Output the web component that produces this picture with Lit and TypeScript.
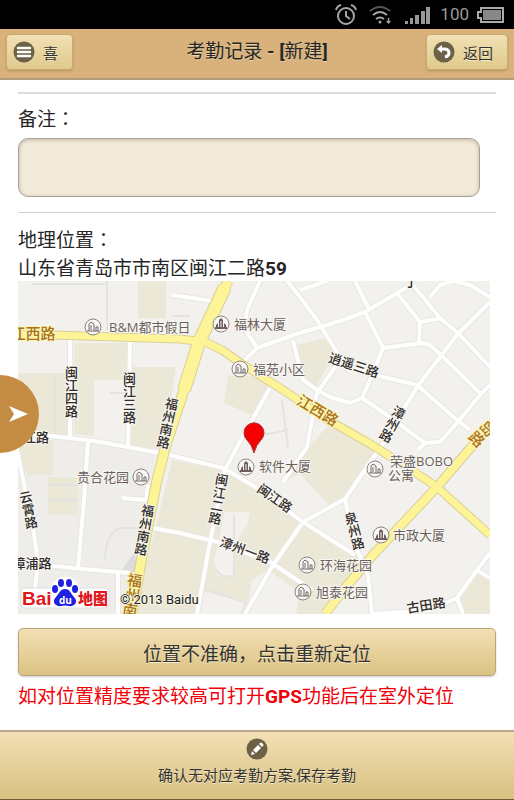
import { LitElement, html, css, svg } from "lit";
import { customElement, property, state } from "lit/decorators.js";

type Point = [number, number];
type Label = { text: string; at: Point; angle?: number; vertical?: boolean; main?: boolean };
type Poi = { text: string; icon: Point; at: Point; tower?: boolean; second?: string };

/* Blocks of built-up land */
const BLOCKS = [
  "M74 343H127V380H94V436L74 434Z",
  "M134 367H176L163 450L131 445V367Z",
  "M138 281H166V318H138Z",
  "M18 373H68V434H42L18 430Z",
  "M18 441L53 440V475H28L18 460Z",
  "M48 477H79L78 515H48Z",
  "M172 460L222 470L257 490L303 522L345 552L365 557L325 614H132L155 530Z",
  "M330 424L378 449L345 498L330 506L300 474L284 482L308 447Z",
  "M228 376L262 376L270 388L252 415L224 403Z",
  "M297 345L330 337L336 353L315 388L303 378Z",
  "M463 614L458 598L478 572L490 580V614Z",
];
/* Paler courtyards inside the blocks */
const YARDS = [
  "M225 512H250L247 525L234 545L234 575L218 576L214 560Z",
  "M252 580L268 570L300 592L296 614H246Z",
  "M204 591L245 600L240 614H199Z",
];
const LANES = [
  "M107 281V330", "M32 284H106", "M55 373V434", "M110 393H126", "M172 316L190 316",
  "M105 560Q106 530 122 528L152 528", "M48 485H78M48 500H78", "M234 515L234 575Q222 580 217 570",
  "M203 589L248 603", "M282 400L288 448", "M245 430L268 434L288 430",
];
const STREETS = [
  "M70 339V437", "M130 342L128 448", "M18 433L60 437L95 441L165 454L223 468L257 488L303 522L355 555",
  "M88 441L84 500L78 568", "M16 445L33 528L38 562L35 590", "M18 562L83 569L130 573",
  "M118 574V614", "M122 498L146 500L148 485", "M153 528L180 533L217 542L270 562L312 590",
  "M270 388L237 447L225 470L210 542L197 614", "M490 302L457 335L417 387L380 448L345 499L303 522L273 565L245 614",
  "M345 499L355 545L368 575L372 614", "M340 360L317 393L307 447L283 482",
  "M383 348L373 373L362 398L350 403L330 397L317 390L303 380L293 341",
  "M362 398L387 415L425 443L440 442L457 423L480 395L490 385", "M425 443L418 450",
  "M355 368L383 377L417 385L457 420L470 430", "M243 362L257 348L293 335L340 321L365 312L397 293L413 284",
  "M260 281L247 310L244 328L257 348", "M287 281L300 297L317 320L337 352L350 372", "M300 290L327 281",
  "M172 295L212 301", "M355 281L370 311", "M365 312L383 348L423 343L430 345L443 357L480 393",
  "M397 293L420 322L442 318M420 322L419 343", "M413 285L440 318L458 333L490 367",
  "M430 297L440 285L453 281L470 285L490 297", "M373 614L430 610L457 598L477 570L490 553M477 570L490 578M457 598L463 614",
];
const AVENUES = [
  { d: "M18 334L180 339L205 342L222 350L245 366L280 388L330 421L372 445L413 471L437 487L490 535", w: 7 },
  { d: "M490 425L473 445L437 487L373 555L345 588L325 614", w: 8 },
  { d: "M228 281L199 342L184 390L166 445L157 480L141 562L132 614", w: 9 },
  { d: "M225 287L199 342L184 390", w: 12 },
];
const LABELS: Label[] = [
  { text: "闽江四路", at: [71, 392], vertical: true },
  { text: "闽江三路", at: [129, 398], vertical: true },
  { text: "福州南路", at: [167, 423], vertical: true, angle: 12 },
  { text: "福州南路", at: [144, 530], vertical: true, angle: 10 },
  { text: "闽江二路", at: [218, 499], vertical: true, angle: 10 },
  { text: "漳州路", at: [392, 424], vertical: true, angle: 28 },
  { text: "泉州路", at: [354, 531], vertical: true, angle: -15 },
  { text: "云霄路", at: [28, 510], vertical: true, angle: -12 },
  { text: "闽江路", at: [275, 498], angle: 35 },
  { text: "漳州一路", at: [245, 550], angle: 20 },
  { text: "逍遥三路", at: [354, 365], angle: 18 },
  { text: "古田路", at: [426, 605], angle: -9 },
  { text: "漳浦路", at: [32, 563] },
  { text: "江路", at: [36, 437] },
  { text: "丁", at: [411, 281] },
  { text: "江西路", at: [33, 333], main: true },
  { text: "江西路", at: [318, 410], main: true, angle: 31 },
  { text: "福州南", at: [132, 595], main: true, vertical: true, angle: 9 },
  { text: "青岛路", at: [487, 428], main: true, vertical: true, angle: 45 },
];
const POIS: Poi[] = [
  { text: "B&M都市假日", icon: [93, 327], at: [109, 327] },
  { text: "福林大厦", icon: [221, 324], at: [234, 324], tower: true },
  { text: "福苑小区", icon: [240, 369], at: [253, 369] },
  { text: "软件大厦", icon: [246, 467], at: [259, 466], tower: true },
  { text: "贵合花园", icon: [141, 477], at: [77, 477] },
  { text: "荣盛BOBO", icon: [375, 469], at: [390, 461], second: "公寓" },
  { text: "市政大厦", icon: [381, 535], at: [393, 535], tower: true },
  { text: "环海花园", icon: [307, 565], at: [320, 565] },
  { text: "旭泰花园", icon: [303, 592], at: [316, 592] },
];

@customElement("status-bar")
export class StatusBar extends LitElement {
  @property({ type: Number }) charge = 100;
  static styles = css`
    :host { display: flex; align-items: center; justify-content: flex-end; height: 29px; padding-right: 10px; background: #000; color: #999; }
    svg { display: block; }
    .alarm { margin-right: 12px; }
    .wifi { margin-right: 12px; }
    .signal { margin-right: 10px; }
    .charge { font: 17px/29px Roboto, sans-serif; margin-right: 8px; }
  `;
  render() {
    return html`
      <svg class="alarm" width="22" height="22" viewBox="0 0 22 22" fill="none" stroke="#a5a5a5" stroke-width="2">
        <circle cx="11" cy="12" r="8" /><path d="M11 7v5l4 3M1 6q1-4 5-5M21 6q-1-4-5-5" />
      </svg>
      <svg class="wifi" width="24" height="20" viewBox="0 0 24 20" fill="none" stroke="#a5a5a5" stroke-width="2">
        <path d="M1 6q10-8 20 0" stroke="#555" /><path d="M4 10q7-6 14 0M7 14q4-3 8 0" />
        <circle cx="11" cy="17" r="1.5" fill="#a5a5a5" stroke="none" /><path d="M19.500 13v5" stroke-width="1.500" /><path d="M17 16h5l-2.500 3z" fill="#a5a5a5" stroke="none" />
      </svg>
      <svg class="signal" width="25" height="18" viewBox="0 0 25 18" fill="#999">
        <path d="M0 15h3v3H0zM5 12h3v6H5zM10 9h4v9h-4zM16 5h4v13h-4zM21 1h4v17h-4z" />
      </svg>
      <span class="charge">${this.charge}</span>
      <svg width="27" height="16" viewBox="0 0 27 16">
        <path d="M4 1h22v14H4v-4H1V5h3z" fill="none" stroke="#aaa" stroke-width="2" /><path d="M6 3h18v10H6z" fill="#888" />
      </svg>
    `;
  }
}

@customElement("street-map")
export class StreetMap extends LitElement {
  static styles = css`
    :host { display: block; }
    svg { display: block; width: 100%; height: auto; }
    text { font: 13px "Open Sans", "Noto Sans CJK SC", sans-serif; fill: #6a615c; }
    .street, .avenue, .lane { fill: none; stroke-linejoin: round; }
    .street { stroke: #fefefe; stroke-width: 4px; }
    .street.casing { stroke: #e9e6e1; stroke-width: 6px; }
    .lane { stroke: #e4e3e1; stroke-width: 2px; }
    .block { fill: #ebe8d8; }
    .yard { fill: #f3f1ee; }
    .avenue { stroke: #fdf498; }
    .avenue.edge { stroke: #d9cf95; }
    .halo { paint-order: stroke; stroke: #f8f6f2; stroke-width: 2px; }
    .road { font-weight: 500; fill: #302d2a; text-anchor: middle; dominant-baseline: central; }
    .main { font-size: 15px; fill: #a9731b; stroke: #fcf5b8; }
    .down { writing-mode: vertical-rl; }
    .credit { font: 13px Roboto, sans-serif; fill: #222; stroke: #f5f2e4; }
    .brand { font: 700 19px "Liberation Sans", sans-serif; fill: #e1171c; }
    .brand.cjk { font: 900 15px "Noto Sans CJK SC", sans-serif; }
    .brand.du { font: 700 10px "Open Sans", sans-serif; fill: #fff; }
  `;
  private label(l: Label) {
    return svg`<text class="halo road ${l.main ? "main" : ""} ${l.vertical ? "down" : ""}"
      transform="translate(${l.at[0]} ${l.at[1]}) rotate(${l.angle ?? 0})">${l.text}</text>`;
  }
  private poi(p: Poi) {
    return svg`
      <g transform="translate(${p.icon[0]} ${p.icon[1]})">
        <circle r="8" fill="#f8f6f4" stroke="#8d8580" />
        ${p.tower
          ? svg`<path d="M0-6L2-4V3H3V-1L5 1V3H6V5H-6V3H-5V1L-3-1V3H-2V-4Z" fill="#6f5f5c" /><path d="M0-3V3" stroke="#f8f6f4" />`
          : svg`<path d="M-4 4V-3L-2-5L1-3V4M-6 4H6M3 4V0H5V4M-2-2V3" fill="none" stroke="#756b68" />`}
      </g>
      <text class="halo" x=${p.at[0]} y=${p.at[1] + 5}>${p.text}</text>
      ${p.second ? svg`<text class="halo" x=${p.at[0] - 2} y=${p.at[1] + 19}>${p.second}</text>` : ""}`;
  }
  render() {
    return html`
      <svg viewBox="18 281 472 333" role="img" aria-label="地图">
        <rect x="18" y="281" width="472" height="333" fill="#f3f1ee" />
        <path d="M18 441L88 441L155 454L130 614H18Z" fill="#efedea" />
        ${BLOCKS.map((d) => svg`<path class="block" d=${d} />`)}
        ${YARDS.map((d) => svg`<path class="yard" d=${d} />`)}
        <path d="M120 572L135 552L137 572Z" fill="#dcdcdc" />
        ${LANES.map((d) => svg`<path class="lane" d=${d} />`)}
        ${STREETS.map((d) => svg`<path class="street casing" d=${d} />`)}
        ${STREETS.map((d) => svg`<path class="street" d=${d} />`)}
        ${AVENUES.map((a) => svg`<path class="avenue edge" d=${a.d} stroke-width=${a.w + 2} />`)}
        ${AVENUES.map((a) => svg`<path class="avenue" d=${a.d} stroke-width=${a.w} />`)}
        ${LABELS.map((l) => this.label(l))}
        ${POIS.map((p) => this.poi(p))}
        <path d="M254 453Q252 445 247 440A10 10 0 1 1 261 440Q256 445 254 453Z" fill="#f40000" stroke="#a33" />
        <g>
          <rect x="21" y="588" width="88" height="20" rx="4" fill="#fff" stroke="#ddd" />
          <circle cx="65" cy="592" r="15" fill="#fff" />
          <text class="brand" x="22" y="605">Bai</text>
          <g fill="#2020e0">
            <ellipse cx="55" cy="589" rx="3" ry="4" /><ellipse cx="61" cy="583" rx="3" ry="4" />
            <ellipse cx="69" cy="583" rx="3" ry="4" /><ellipse cx="75" cy="589" rx="3" ry="4" />
            <path d="M65 589C70 589 71 594 74 597C79 602 74 607 69 606Q65 605 61 606C56 607 51 602 56 597C59 594 60 589 65 589Z" />
          </g>
          <text class="brand du" x="59" y="604">du</text>
          <text class="brand cjk" x="78" y="604">地图</text>
        </g>
        <text class="halo credit" x="120" y="604">© 2013 Baidu</text>
      </svg>
    `;
  }
}

@customElement("app-root")
export class AppRoot extends LitElement {
  @state() private remark = "";
  static styles = css`
    :host {
      display: flex; flex-direction: column; position: relative; min-height: 100vh; background: #fff; color: #262626;
      font: 19px/30px Roboto, "Noto Sans CJK SC", sans-serif;
    }
    * { box-sizing: border-box; }
    button { font-family: inherit; color: #333; cursor: pointer; text-shadow: 0 1px 0 #f6e9c4; }
    b { font-weight: 700; }
    .punct { font-family: "Noto Sans CJK TC", sans-serif; }
    .bar {
      display: grid; grid-template-columns: 1fr auto 1fr; align-items: center; height: 51px; padding: 0 6px 3px;
      background: #d8b27a; border-bottom: 2px solid #b39b7f;
    }
    .bar h1 { margin: 0; font-size: 19px; font-weight: 400; line-height: 30px; text-shadow: 0 1px 0 #ead0a5; }
    .small {
      display: flex; align-items: center; gap: 8px; height: 36px; padding: 0 14px 0 6px; font-size: 15px;
      border: 1px solid #c9ab74; border-radius: 4px; background: linear-gradient(#f2e0b4, #dfc98c);
      box-shadow: 0 1px 2px #b4905a;
    }
    .back { justify-self: end; }
    svg { display: block; flex: none; }
    main { flex: 1; padding: 12px 18px 16px; }
    .field { border-top: 2px solid #ddd; padding-top: 9px; }
    .place { border-top: 1px solid #d2d2d2; margin-top: 15px; padding-top: 11px; }
    label, .caption { display: block; }
    .remark {
      display: block; width: calc(100% - 16px); height: 59px; margin-top: 3px; padding: 8px 12px; resize: none;
      border: 1px solid #a9a196; border-radius: 10px; background: #f3ebda; box-shadow: inset 0 1px 4px #bdb39e;
      font: inherit; color: inherit; outline: none;
    }
    .address { margin: 0; padding-top: 1px; line-height: 24px; }
    street-map { width: calc(100% - 6px); }
    .relocate {
      display: block; width: 100%; height: 48px; margin: 14px 0 6px; font-size: 19px;
      border: 1px solid #b9a47c; border-radius: 5px; background: linear-gradient(#f2e0b4, #dbc283);
      box-shadow: 0 1px 2px #ccc;
    }
    .hint { margin: 0; color: #f00008; }
    .save {
      display: flex; flex: none; flex-direction: column; align-items: center; width: 100%; height: 70px; padding: 6px 0 0;
      border: 0; border-top: 2px solid #b9a88c; border-bottom: 1px solid #6f5a33;
      background: linear-gradient(#f2e0b4, #d9c182); font-size: 15px; line-height: 24px; gap: 4px;
    }
    .drawer {
      position: absolute; left: 0; top: 375px; width: 39px; height: 78px; padding: 0 0 0 7px; border: 0;
      border-radius: 0 39px 39px 0; background: #c48c42;
    }
  `;
  render() {
    return html`
      <status-bar></status-bar>
      <header class="bar">
        <div>
          <button class="small">
            <svg width="22" height="22" viewBox="0 0 22 22"><circle cx="11" cy="11" r="10.500" fill="#6c6046" /><path d="M5 7h12M5 11h12M5 15h12" stroke="#fff" stroke-width="2.500" stroke-linecap="round" /></svg>
            喜
          </button>
        </div>
        <h1>考勤记录 <b>- [</b>新建<b>]</b></h1>
        <button class="small back">
          <svg width="22" height="22" viewBox="0 0 22 22"><circle cx="11" cy="11" r="10.500" fill="#6c6046" /><path d="M8 8h3q5 0 5 4q0 3-4 4" fill="none" stroke="#fff" stroke-width="3" /><path d="M4 8l5-4v8z" fill="#fff" /></svg>
          返回
        </button>
      </header>
      <main>
        <section class="field">
          <label for="remark">备注<span class="punct">：</span></label>
          <textarea id="remark" class="remark" .value=${this.remark}
            @input=${(e: Event) => (this.remark = (e.target as HTMLTextAreaElement).value)}></textarea>
        </section>
        <section class="place">
          <span class="caption">地理位置<span class="punct">：</span></span>
          <p class="address">山东省青岛市市南区闽江二路<b>59</b></p>
          <street-map></street-map>
          <button class="relocate">位置不准确，点击重新定位</button>
          <p class="hint">如对位置精度要求较高可打开<b>GPS</b>功能后在室外定位</p>
        </section>
      </main>
      <button class="save">
        <svg width="22" height="22" viewBox="0 0 22 22"><circle cx="11" cy="11" r="10.500" fill="#6c6046" /><path d="M5 17l1-4l3 3zM7 12l5-5l3 3l-5 5zM13 6l1-1q1-1 2 0l1 1q1 1 0 2l-1 1z" fill="#fff" /></svg>
        确认无对应考勤方案,保存考勤
      </button>
      <button class="drawer" aria-label="展开">
        <svg width="22" height="20" viewBox="0 0 22 20"><path d="M2 2L21 10L2 18L7 10Z" fill="#fff" /></svg>
      </button>
    `;
  }
}
